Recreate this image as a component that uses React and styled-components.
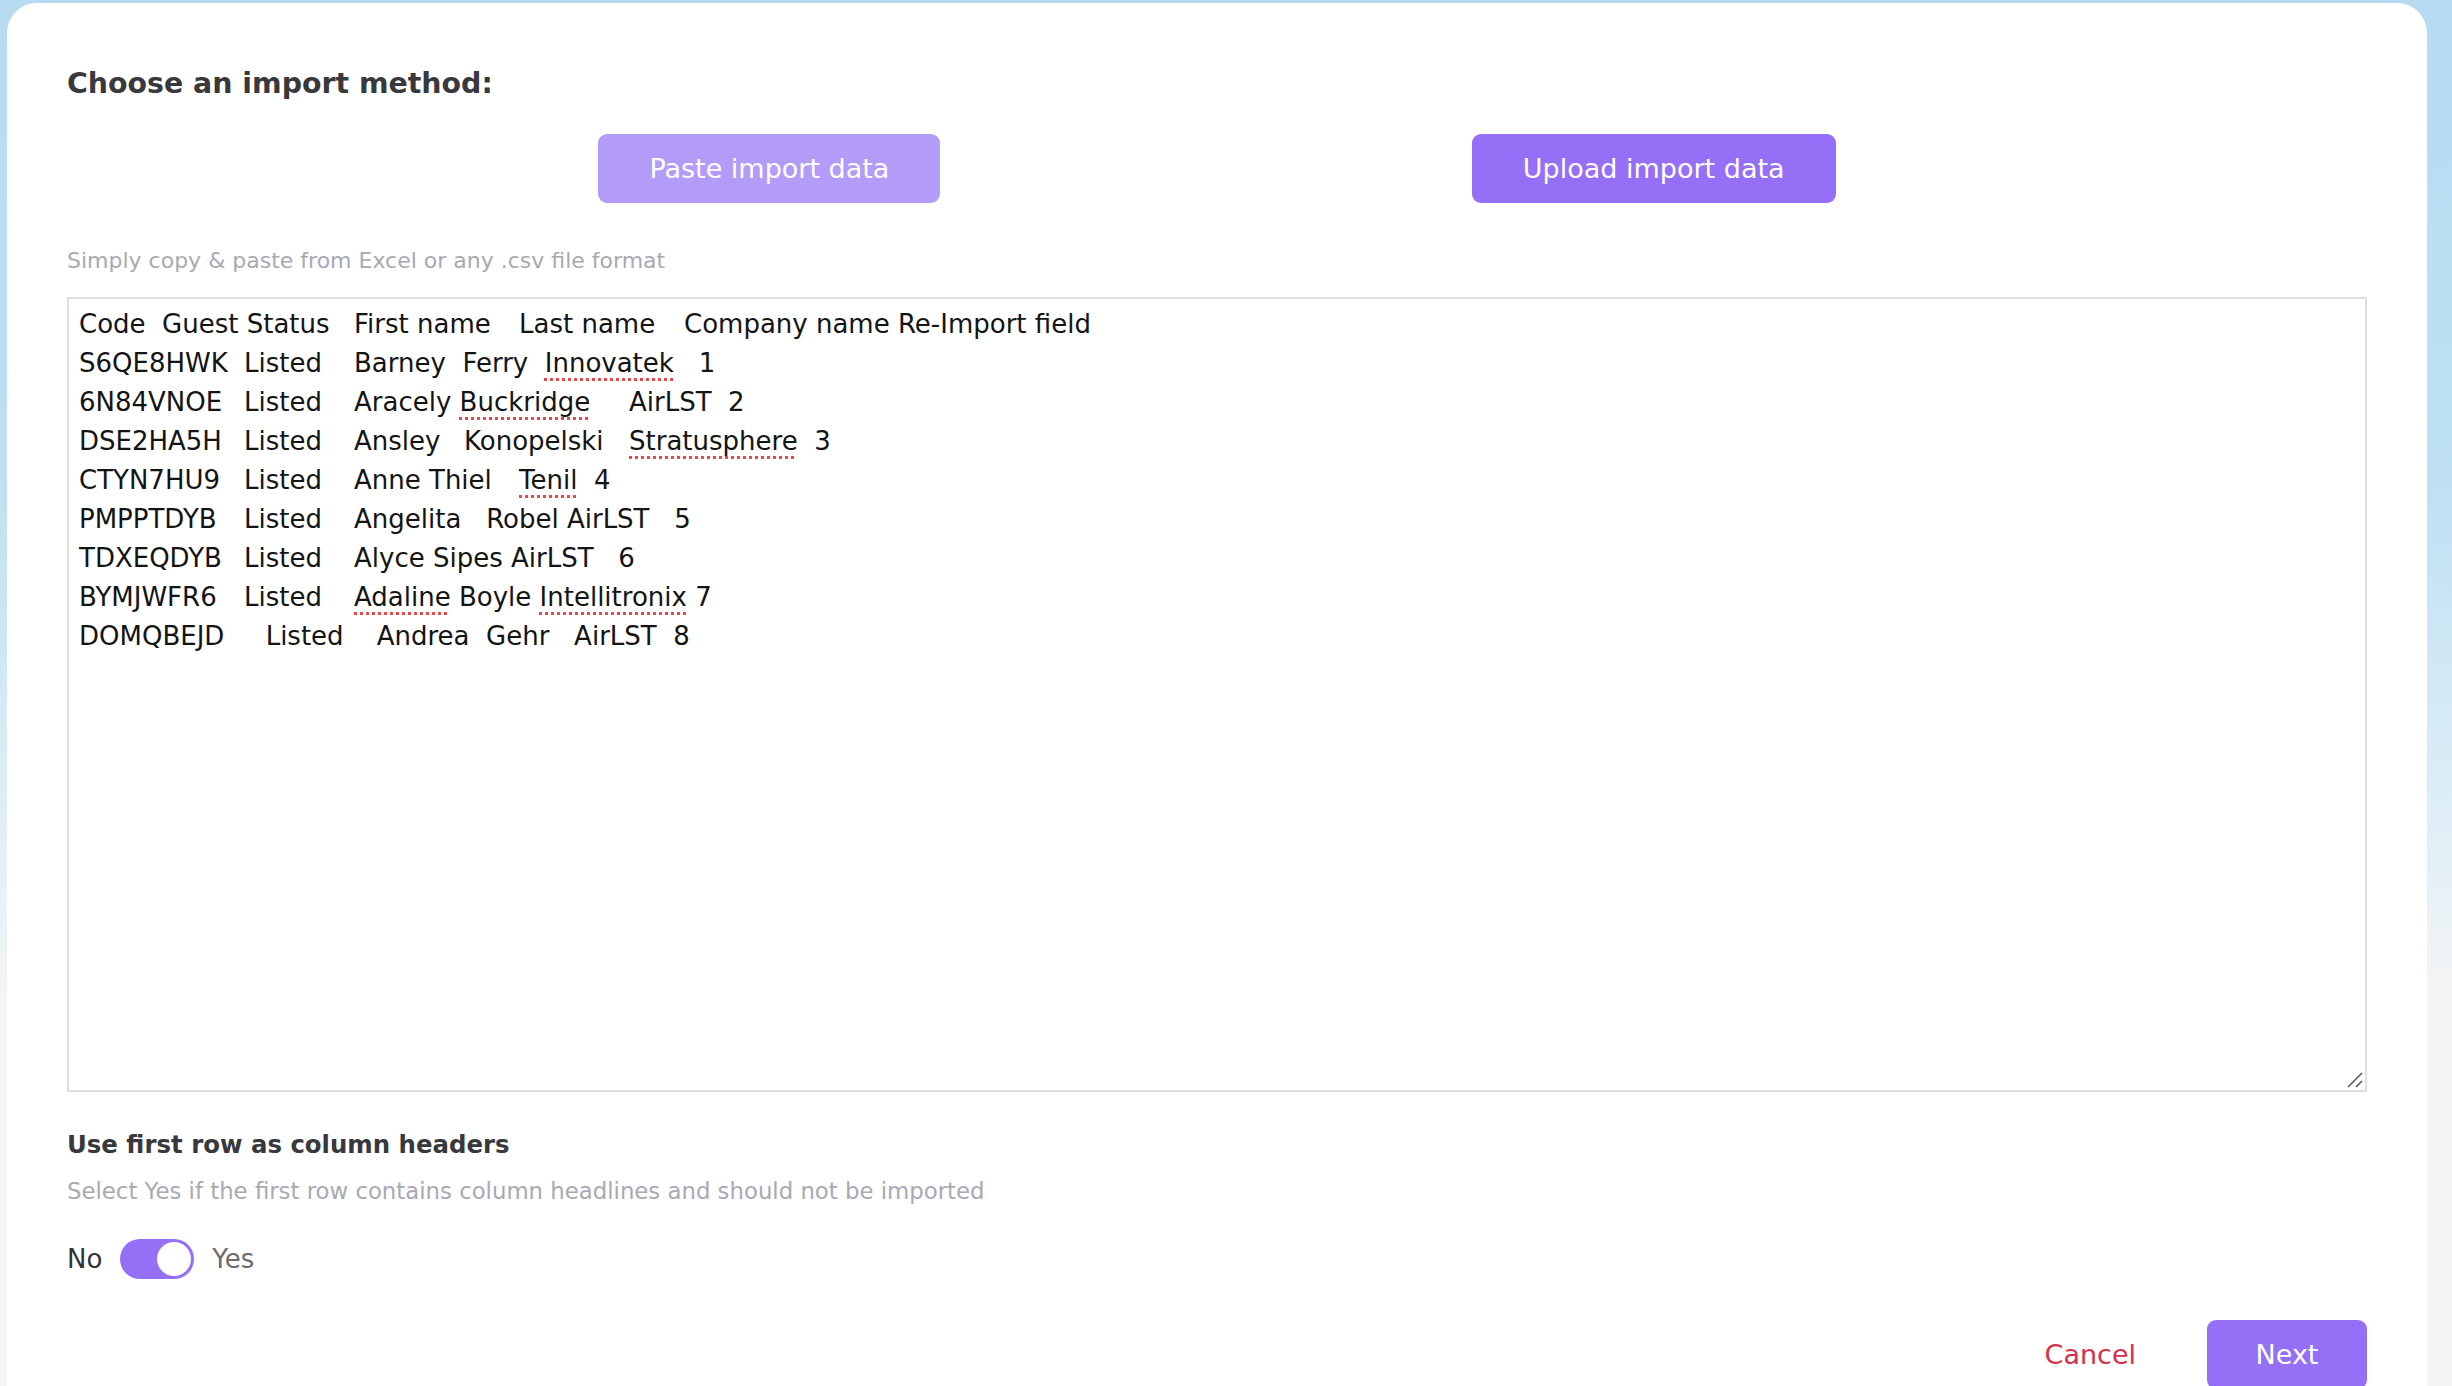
import React, { useState } from 'react'
import styled, { createGlobalStyle } from 'styled-components'

const GlobalStyle = createGlobalStyle`
  html, body {
    margin: 0;
    height: 100%;
    overflow: hidden;
  }
  body {
    font-family: "DejaVu Sans", "Open Sans", sans-serif;
    background: linear-gradient(180deg, #b6dbf1 0%, #bfe0f3 35%, #e3f0f7 62%, #f4f4f4 72%, #f4f4f4 100%);
  }
`

const rows = [
  [['Code  Guest Status\tFirst name\tLast name\tCompany name Re-Import field']],
  [['S6QE8HWK\tListed\tBarney  Ferry  '], ['Innovatek', true], ['   1']],
  [['6N84VNOE\tListed\tAracely '], ['Buckridge', true], ['\tAirLST  2']],
  [['DSE2HA5H\tListed\tAnsley\tKonopelski\t'], ['Stratusphere', true], ['  3']],
  [['CTYN7HU9\tListed\tAnne Thiel\t'], ['Tenil', true], ['  4']],
  [['PMPPTDYB\tListed\tAngelita   Robel AirLST   5']],
  [['TDXEQDYB\tListed\tAlyce Sipes AirLST   6']],
  [['BYMJWFR6\tListed\t'], ['Adaline', true], [' Boyle '], ['Intellitronix', true], [' 7']],
  [['DOMQBEJD     Listed    Andrea  Gehr   AirLST  8']],
]

function App() {
  const [firstRowHeaders, setFirstRowHeaders] = useState(true)

  return (
    <>
      <GlobalStyle />
      <Page>
        <Card>
          <Title>Choose an import method:</Title>
          <MethodRow>
            <MethodButton type="button" $muted>Paste import data</MethodButton>
            <MethodButton type="button">Upload import data</MethodButton>
          </MethodRow>
          <Hint $top="43px">Simply copy &amp; paste from Excel or any .csv file format</Hint>

          <DataBox role="textbox" aria-multiline="true">
            {rows.map((row, i) => (
              <Line key={i}>
                {row.map(([text, flagged], j) =>
                  flagged ? <Flagged key={j}>{text}</Flagged> : <React.Fragment key={j}>{text}</React.Fragment>
                )}
              </Line>
            ))}
            <Grip width="16" height="16" viewBox="0 0 16 16">
              <path d="M1 15 L15 1 M9 15 L15 9" stroke="#5a5a5a" strokeWidth="1.6" fill="none" />
            </Grip>
          </DataBox>

          <SectionTitle>Use first row as column headers</SectionTitle>
          <Hint $top="17px" $size="22.8px">
            Select Yes if the first row contains column headlines and should not be imported
          </Hint>

          <ToggleRow>
            <ToggleLabel>No</ToggleLabel>
            <Switch
              type="button"
              $on={firstRowHeaders}
              onClick={() => setFirstRowHeaders(!firstRowHeaders)}
            >
              <Knob $on={firstRowHeaders} />
            </Switch>
            <ToggleLabel $muted>Yes</ToggleLabel>
          </ToggleRow>

          <Footer>
            <CancelButton type="button">Cancel</CancelButton>
            <NextButton type="button">Next</NextButton>
          </Footer>
        </Card>
      </Page>
    </>
  )
}

export default App

const Page = styled.div`
  height: 1386px;
  padding: 3px 25px 0 7px;
  box-sizing: border-box;
`

const Card = styled.div`
  height: 100%;
  background: #fff;
  border-radius: 30px 30px 0 0;
  padding: 64px 60px 0;
  box-sizing: border-box;
`

const Title = styled.h2`
  margin: 0;
  font-size: 28.4px;
  line-height: 34px;
  font-weight: 700;
  color: #38383d;
`

const MethodRow = styled.div`
  display: flex;
  justify-content: space-evenly;
  margin-top: 33px;
`

const MethodButton = styled.button`
  height: 69px;
  padding: 0 51px;
  border: none;
  border-radius: 9px;
  background: ${(p) => (p.$muted ? '#b39bf8' : '#956ff6')};
  color: #fff;
  font-family: inherit;
  font-size: 27px;
  cursor: pointer;
`

const Hint = styled.p`
  margin: ${(p) => p.$top} 0 0;
  font-size: ${(p) => p.$size || '22px'};
  line-height: 29px;
  color: #a9a9b3;
`

const DataBox = styled.div`
  position: relative;
  margin-top: 22px;
  height: 795px;
  border: 2px solid #dedede;
  padding: 6px 10px;
  box-sizing: border-box;
  font-size: 26px;
  line-height: 39px;
  color: #141414;
  white-space: pre;
  tab-size: 55px;
`

const Line = styled.div``

const Flagged = styled.span`
  text-decoration: underline dotted #e5484d;
  text-decoration-thickness: 3px;
  text-underline-offset: 6px;
`

const Grip = styled.svg`
  position: absolute;
  right: 2px;
  bottom: 2px;
`

const SectionTitle = styled.h3`
  margin: 38px 0 0;
  font-size: 24.4px;
  line-height: 30px;
  font-weight: 700;
  color: #38383d;
`

const ToggleRow = styled.div`
  display: flex;
  align-items: center;
  gap: 18px;
  margin-top: 33px;
`

const ToggleLabel = styled.span`
  font-size: 26px;
  color: ${(p) => (p.$muted ? '#6b6b70' : '#333336')};
`

const Switch = styled.button`
  position: relative;
  width: 74px;
  height: 40px;
  padding: 0;
  border: none;
  border-radius: 20px;
  background: ${(p) => (p.$on ? '#956ff6' : '#d4d4d8')};
  cursor: pointer;
`

const Knob = styled.span`
  position: absolute;
  top: 3px;
  left: ${(p) => (p.$on ? '37px' : '3px')};
  width: 34px;
  height: 34px;
  border-radius: 50%;
  background: #fff;
`

const Footer = styled.div`
  display: flex;
  justify-content: flex-end;
  align-items: center;
  gap: 71px;
  margin-top: 41px;
`

const CancelButton = styled.button`
  padding: 0;
  border: none;
  background: none;
  color: #d6304a;
  font-family: inherit;
  font-size: 27px;
  cursor: pointer;
`

const NextButton = styled.button`
  width: 160px;
  height: 69px;
  border: none;
  border-radius: 9px;
  background: #956ff6;
  color: #fff;
  font-family: inherit;
  font-size: 27px;
  cursor: pointer;
`
